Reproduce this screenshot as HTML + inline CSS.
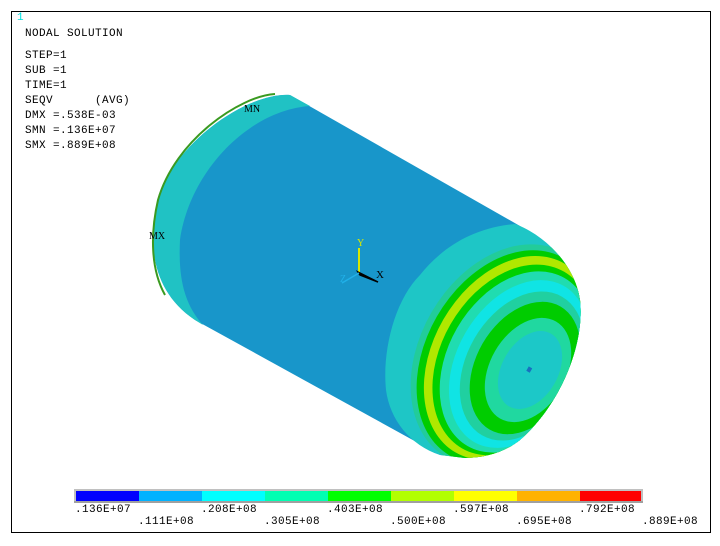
<!DOCTYPE html>
<html><head><style>
body{margin:0;background:#fff;width:720px;height:546px;overflow:hidden;position:relative;}
.t{position:absolute;font-size:11px;line-height:11px;color:#000;white-space:pre;font-family:"Liberation Mono","DejaVu Sans Mono",monospace;letter-spacing:0.4px}
</style></head><body>
<div style="position:absolute;left:11px;top:11px;width:698px;height:520px;border:1px solid #000"></div>
<div class="t" style="left:17px;top:13px;color:#00e0e0">1</div>
<div class="t" style="left:25px;top:29px">NODAL SOLUTION</div>
<div class="t" style="left:25px;top:51px">STEP=1</div>
<div class="t" style="left:25px;top:66px">SUB =1</div>
<div class="t" style="left:25px;top:81px">TIME=1</div>
<div class="t" style="left:25px;top:96px">SEQV      (AVG)</div>
<div class="t" style="left:25px;top:111px">DMX =.538E-03</div>
<div class="t" style="left:25px;top:126px">SMN =.136E+07</div>
<div class="t" style="left:25px;top:141px">SMX =.889E+08</div>
<svg width="720" height="546" style="position:absolute;left:0;top:0">
<defs><clipPath id="rc"><path d="M515 224 C545 235 575 265 580 300 C585 345 560 405 520 440 C505 452 485 458 465 458 L440 455 C410 445 390 420 386 390 C382 350 395 300 420 275 C440 250 470 228 515 224 Z"/></clipPath></defs>
<path d="M290 95 L520 226 L540 240 L470 458 L440 455 L195 320 C150 290 148 240 158 200 C175 140 250 92 290 95 Z" fill="#1896ca"/>
<path d="M290 95 C250 92 175 140 158 200 C148 240 150 290 195 320 L203 325 C185 305 178 280 180 240 C190 170 250 110 310 106 Z" fill="#20c2c4"/>
<path d="M275 94 C240 96 175 140 158 200 C150 235 151 270 165 295" fill="none" stroke="#3a9a20" stroke-width="2"/>
<g clip-path="url(#rc)">
<rect x="380" y="200" width="220" height="270" fill="#1ec6c6"/>
<ellipse cx="505" cy="355" rx="85" ry="118" transform="rotate(30 505 355)" fill="#22cc9a"/>
<ellipse cx="507" cy="357" rx="81" ry="114" transform="rotate(30 507 357)" fill="#00cc00"/>
<ellipse cx="510" cy="358" rx="77" ry="109" transform="rotate(30 510 358)" fill="#b0e800"/>
<ellipse cx="513" cy="360" rx="72" ry="102" transform="rotate(30 513 360)" fill="#00d000"/>
<ellipse cx="516" cy="362" rx="68" ry="97" transform="rotate(30 516 362)" fill="#20dcb0"/>
<ellipse cx="519" cy="364" rx="62" ry="90" transform="rotate(30 519 364)" fill="#10e4e4"/>
<ellipse cx="522" cy="366" rx="55" ry="80" transform="rotate(30 522 366)" fill="#20d0a0"/>
<ellipse cx="525" cy="368" rx="49" ry="71" transform="rotate(30 525 368)" fill="#00cc00"/>
<ellipse cx="528" cy="370" rx="38" ry="56" transform="rotate(30 528 370)" fill="#20d8a0"/>
<ellipse cx="530" cy="370" rx="28" ry="42" transform="rotate(30 530 370)" fill="#1cc8c8"/>
</g>
<rect x="527" y="367" width="4" height="5" fill="#1870c0" transform="rotate(30 529 370)"/>
<line x1="359" y1="273" x2="359" y2="248" stroke="#d8e800" stroke-width="2"/>
<polygon points="358,272 378,282 360,275" fill="#000" stroke="#000" stroke-width="1.5"/>
<line x1="359" y1="273" x2="342" y2="283" stroke="#20b0e8" stroke-width="1.5"/>
<text x="357" y="246" font-size="10" fill="#d8e800" font-family="Liberation Serif">Y</text>
<text x="376" y="278" font-size="11" fill="#000" font-family="Liberation Serif">X</text>
<text x="340" y="282" font-size="10" fill="#20b0e8" font-family="Liberation Serif">Z</text>
<text x="244" y="112" font-size="10" fill="#000" font-family="Liberation Serif">MN</text>
<text x="149" y="239" font-size="10" fill="#000" font-family="Liberation Serif">MX</text>
<rect x="74" y="489" width="569" height="14" fill="#c0c0c0"/>
<g transform="translate(76,491)">
<rect x="0" width="63" height="10" fill="#0000ff"/>
<rect x="63" width="63" height="10" fill="#00b2ff"/>
<rect x="126" width="63" height="10" fill="#00ffff"/>
<rect x="189" width="63" height="10" fill="#00ffb2"/>
<rect x="252" width="63" height="10" fill="#00ff00"/>
<rect x="315" width="63" height="10" fill="#b2ff00"/>
<rect x="378" width="63" height="10" fill="#ffff00"/>
<rect x="441" width="63" height="10" fill="#ffb200"/>
<rect x="504" width="61" height="10" fill="#ff0000"/>
</g>
<line x1="74" y1="502" x2="643" y2="502" stroke="#808080"/>
</svg>
<div class="t" style="left:75px;top:505px">.136E+07</div>
<div class="t" style="left:138px;top:517px">.111E+08</div>
<div class="t" style="left:201px;top:505px">.208E+08</div>
<div class="t" style="left:264px;top:517px">.305E+08</div>
<div class="t" style="left:327px;top:505px">.403E+08</div>
<div class="t" style="left:390px;top:517px">.500E+08</div>
<div class="t" style="left:453px;top:505px">.597E+08</div>
<div class="t" style="left:516px;top:517px">.695E+08</div>
<div class="t" style="left:579px;top:505px">.792E+08</div>
<div class="t" style="left:642px;top:517px">.889E+08</div>
</body></html>
